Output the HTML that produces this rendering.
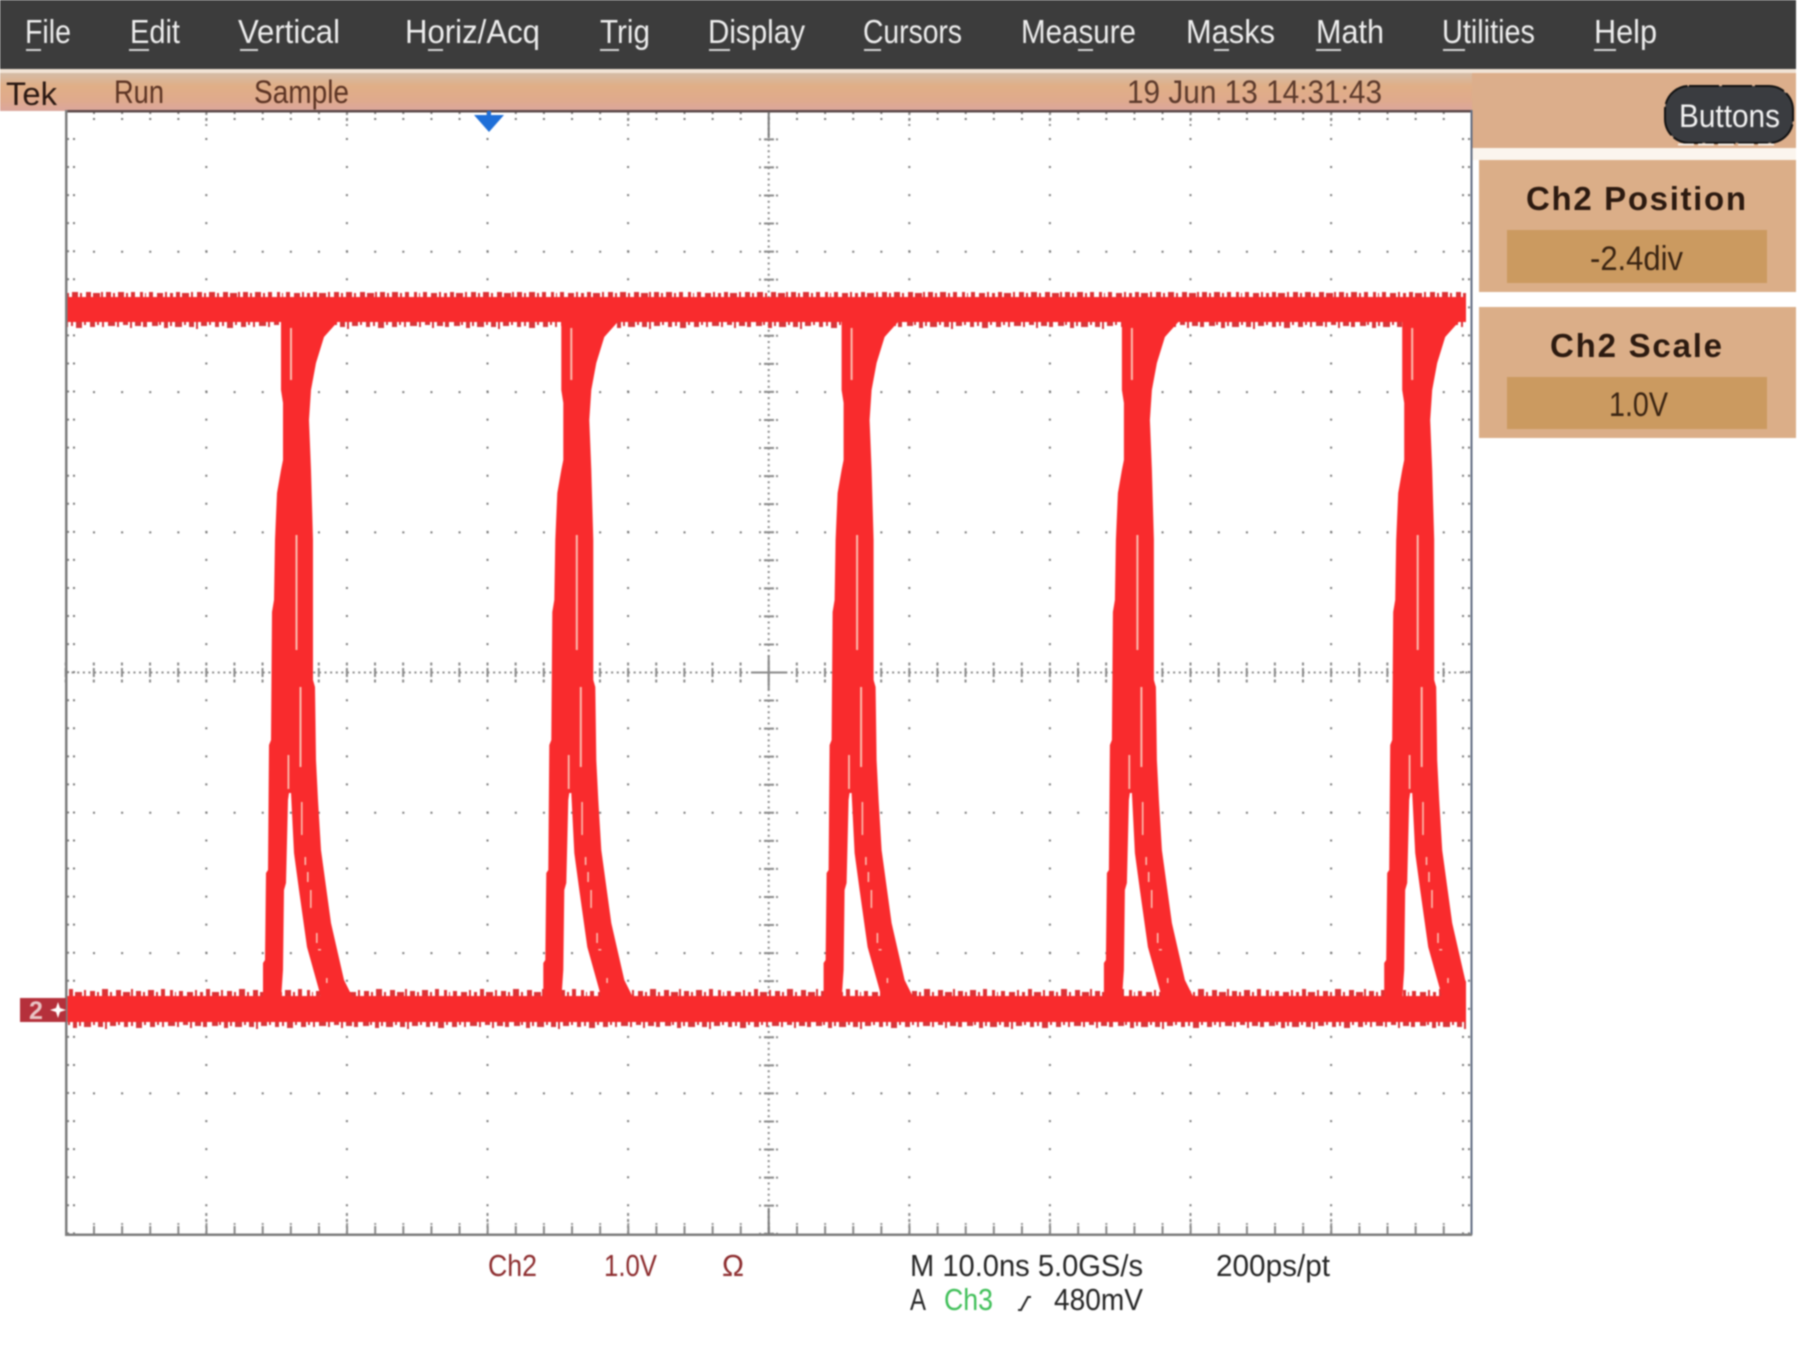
<!DOCTYPE html>
<html lang="en">
<head>
<meta charset="utf-8">
<title>Tek Scope</title>
<style>
html,body{margin:0;padding:0;background:#fff;width:1799px;height:1349px;overflow:hidden}
svg{display:block;filter:blur(.7px)}
text{font-family:"Liberation Sans",Arial,sans-serif}
</style>
</head>
<body>
<svg width="1799" height="1349" viewBox="0 0 1799 1349" xmlns="http://www.w3.org/2000/svg">
<defs>
<linearGradient id="strip" x1="0" y1="0" x2="0" y2="1">
<stop offset="0" stop-color="#d4bba6"/><stop offset=".35" stop-color="#e0ae86"/><stop offset=".7" stop-color="#dfaa8c"/><stop offset="1" stop-color="#dba69c"/>
</linearGradient>
<pattern id="up" patternUnits="userSpaceOnUse" width="137" height="9">
<path fill="#dc3236" d="M3 9V3h3v6zM8 9V5h1v4zM12 9V4h4v5zM20 9V5h6v4zM28 9V3h2v6zM33 9V5h3v4zM39 9V1h4v8zM45 9V5h7v4zM54 9V3h2v6zM60 9V4h5v5zM67 9V5h2v4zM72 9V2h6v7zM80 9V5h2v4zM86 9V3h5v6zM93 9V5h7v4zM101 9V2h2v7zM106 9V4h5v5zM113 9V5h2v4zM118 9V3h6v6zM126 9V5h2v4zM131 9V2h4v7z"/>
</pattern>
<pattern id="dn" patternUnits="userSpaceOnUse" width="151" height="9">
<path fill="#d8363a" d="M1 0v4h6V0zM8 0v3h2V0zM13 0v6h4V0zM19 0v4h2V0zM24 0v5h7V0zM33 0v3h2V0zM38 0v5h5V0zM45 0v7h2V0zM50 0v4h6V0zM58 0v3h2V0zM64 0v5h4V0zM71 0v4h2V0zM76 0v6h6V0zM84 0v3h2V0zM90 0v5h5V0zM97 0v3h2V0zM102 0v5h2V0zM108 0v4h7V0zM117 0v5h2V0zM123 0v3h5V0zM130 0v6h2V0zM135 0v4h6V0zM143 0v5h4V0z"/>
</pattern>
<g id="edge">
<polygon fill="#f92b2d" points="281,318 281,390 283,403 283,460 281,470 277,493 275,540 274,600 272,612 271,740 269,745 268,870 266,873 265,960 263,963 263,1000 281,1000 283,970 284,890 286,883 288,800 289,793 291,793 294,853 299,890 307,947 319,990 321,1000 354,1000 344,980 331,923 321,850 318,800 316,760 315,687 313,680 313,540 311,470 309,420 311,390 316,363 324,337 341,318"/>
<g fill="#fcbcae">
<rect x="290" y="328" width="2" height="52"/>
<rect x="295.500" y="535" width="2" height="115"/>
<rect x="299.500" y="687" width="2" height="80"/>
<rect x="287.500" y="755" width="1.800" height="34"/>
<rect x="301" y="802" width="1.600" height="33"/>
<rect x="304.500" y="857" width="1.600" height="8"/>
<rect x="307" y="872" width="1.600" height="10"/>
<rect x="310" y="890" width="1.600" height="18"/>
<rect x="316" y="933" width="1.600" height="10"/>
<rect x="318" y="949" width="3" height="1.500"/>
<rect x="326" y="978" width="1.600" height="5"/>
</g>
</g>
<clipPath id="scr"><rect x="66" y="112" width="1400" height="1122"/></clipPath>
</defs>

<rect width="1799" height="1349" fill="#fff"/>

<!-- menu bar -->
<rect x="0" y="0" width="1796" height="69" fill="#3c3c3c"/>
<rect x="0" y="69" width="1796" height="4" fill="#f1e3d5"/>

<!-- status strip and right block -->
<rect x="0" y="73" width="1472" height="38" fill="url(#strip)"/>
<rect x="1472" y="73" width="324" height="75" fill="#dcae8b"/>
<rect x="1472" y="148" width="324" height="12" fill="#fbf5ee"/>

<!-- side panels -->
<rect x="1479" y="160" width="317" height="132" fill="#dbae88"/>
<rect x="1507" y="230" width="260" height="53" fill="#cb9a60"/>
<rect x="1479" y="307" width="317" height="131" fill="#dbae88"/>
<rect x="1507" y="377" width="260" height="52" fill="#cb9a60"/>

<g font-size="33" font-weight="700" fill="#2c1a10">
<text x="1526" y="210" textLength="220">Ch2 Position</text>
<text x="1550" y="357" textLength="172">Ch2 Scale</text>
</g>
<g font-size="34" fill="#3a2412">
<text x="1590" y="270" textLength="93" lengthAdjust="spacingAndGlyphs">-2.4div</text>
<text x="1609" y="416" textLength="59" lengthAdjust="spacingAndGlyphs">1.0V</text>
</g>

<!-- Buttons pill -->
<rect x="1665" y="86" width="128" height="57" rx="24" fill="#3a3c40" stroke="#111" stroke-width="2" stroke-dasharray="30 3"/>
<path d="M1678 144.500h100" stroke="#f6efe6" stroke-width="2" stroke-dasharray="16 4"/>
<text x="1679" y="127" font-size="32" fill="#f2f2f2" textLength="101" lengthAdjust="spacingAndGlyphs">Buttons</text>

<!-- menu text -->
<g font-size="33" fill="#ededed">
<text x="25" y="43" textLength="46" lengthAdjust="spacingAndGlyphs">File</text>
<text x="130" y="43" textLength="50" lengthAdjust="spacingAndGlyphs">Edit</text>
<text x="238" y="43" textLength="102" lengthAdjust="spacingAndGlyphs">Vertical</text>
<text x="405" y="43" textLength="135" lengthAdjust="spacingAndGlyphs">Horiz/Acq</text>
<text x="600" y="43" textLength="50" lengthAdjust="spacingAndGlyphs">Trig</text>
<text x="708" y="43" textLength="97" lengthAdjust="spacingAndGlyphs">Display</text>
<text x="863" y="43" textLength="99" lengthAdjust="spacingAndGlyphs">Cursors</text>
<text x="1021" y="43" textLength="115" lengthAdjust="spacingAndGlyphs">Measure</text>
<text x="1186" y="43" textLength="89" lengthAdjust="spacingAndGlyphs">Masks</text>
<text x="1316" y="43" textLength="68" lengthAdjust="spacingAndGlyphs">Math</text>
<text x="1442" y="43" textLength="93" lengthAdjust="spacingAndGlyphs">Utilities</text>
<text x="1594" y="43" textLength="63" lengthAdjust="spacingAndGlyphs">Help</text>
</g>
<g fill="#d8d8d8">
<rect x="26" y="49" width="15" height="2"/>
<rect x="129" y="49" width="20" height="2"/>
<rect x="240" y="49" width="18" height="2"/>
<rect x="428" y="49" width="15" height="2"/>
<rect x="600" y="49" width="19" height="2"/>
<rect x="709" y="49" width="21" height="2"/>
<rect x="864" y="49" width="17" height="2"/>
<rect x="1078" y="49" width="15" height="2"/>
<rect x="1214" y="49" width="15" height="2"/>
<rect x="1316" y="49" width="25" height="2"/>
<rect x="1443" y="49" width="22" height="2"/>
<rect x="1594" y="49" width="22" height="2"/>
</g>

<!-- status text -->
<text x="6" y="105" font-size="32" fill="#2a1812" textLength="51" lengthAdjust="spacingAndGlyphs">Tek</text>
<text x="114" y="103" font-size="32" fill="#5c3424" textLength="50" lengthAdjust="spacingAndGlyphs">Run</text>
<text x="254" y="103" font-size="32" fill="#5c3424" textLength="95" lengthAdjust="spacingAndGlyphs">Sample</text>
<text x="1127" y="103" font-size="32" fill="#5c3a2c" textLength="255" lengthAdjust="spacingAndGlyphs">19 Jun 13 14:31:43</text>

<!-- graticule: major dotted lines -->
<g fill="none" stroke="#7a7a7a" stroke-width="2" stroke-dasharray="2 26.06">
<line x1="206.300" y1="138" x2="206.300" y2="1234"/>
<line x1="346.900" y1="138" x2="346.900" y2="1234"/>
<line x1="487.500" y1="138" x2="487.500" y2="1234"/>
<line x1="628.100" y1="138" x2="628.100" y2="1234"/>
<line x1="909.300" y1="138" x2="909.300" y2="1234"/>
<line x1="1049.900" y1="138" x2="1049.900" y2="1234"/>
<line x1="1190.500" y1="138" x2="1190.500" y2="1234"/>
<line x1="1331.100" y1="138" x2="1331.100" y2="1234"/>
<line x1="68" y1="138" x2="68" y2="1234"/>
<line x1="74" y1="138" x2="74" y2="1234"/>
<line x1="1463" y1="138" x2="1463" y2="1234"/>
<line x1="1469" y1="138" x2="1469" y2="1234"/>
</g>
<g fill="none" stroke="#7a7a7a" stroke-width="2" stroke-dasharray="2 26.12">
<line x1="93" y1="251.800" x2="1471" y2="251.800"/>
<line x1="93" y1="392.100" x2="1471" y2="392.100"/>
<line x1="93" y1="532.400" x2="1471" y2="532.400"/>
<line x1="93" y1="812.800" x2="1471" y2="812.800"/>
<line x1="93" y1="953.100" x2="1471" y2="953.100"/>
<line x1="93" y1="1093.400" x2="1471" y2="1093.400"/>
<line x1="93" y1="113" x2="1471" y2="113"/>
<line x1="93" y1="119" x2="1471" y2="119"/>
<line x1="93" y1="1224" x2="1471" y2="1224" stroke="#999"/>
<line x1="93" y1="1230" x2="1471" y2="1230" stroke-width="8" stroke="#888"/>
</g>
<!-- major edge ticks -->
<g stroke="#8a8a8a" stroke-width="2">
<path stroke-dasharray="3 3" d="M206.300 112v14M346.900 112v14M487.500 112v14M628.100 112v14M909.300 112v14M1049.900 112v14M1190.500 112v14M1331.100 112v14M206.300 1234v-22M346.900 1234v-22M487.500 1234v-22M628.100 1234v-22M909.300 1234v-22M1049.900 1234v-22M1190.500 1234v-22M1331.100 1234v-22"/>
</g>
<!-- centre cross -->
<g fill="none" stroke="#8a8a8a">
<line x1="66" y1="672.500" x2="1471" y2="672.500" stroke-width="2" stroke-dasharray="2 3.62"/>
<line x1="768.700" y1="111" x2="768.700" y2="1234" stroke-width="2" stroke-dasharray="2 3.61"/>
<line x1="64.700" y1="672.500" x2="1471" y2="672.500" stroke-width="9" stroke-dasharray="2 26.12"/>
<line x1="64.700" y1="664" x2="1471" y2="664" stroke-width="3" stroke-dasharray="2 26.12"/>
<line x1="64.700" y1="681" x2="1471" y2="681" stroke-width="3" stroke-dasharray="2 26.12"/>
<line x1="765" y1="110.300" x2="765" y2="1234" stroke-width="2" stroke-dasharray="2 26.06"/>
<line x1="769" y1="110.300" x2="769" y2="1234" stroke-width="8" stroke-dasharray="2 26.06"/>
<line x1="773" y1="110.300" x2="773" y2="1234" stroke-width="2" stroke-dasharray="2 26.06"/>
<line x1="760" y1="110.300" x2="760" y2="1234" stroke-width="2" stroke-dasharray="2 26.06"/>
<line x1="777" y1="110.300" x2="777" y2="1234" stroke-width="2" stroke-dasharray="2 26.06"/>
<path d="M751 672.500h36M768.700 655v35" stroke-width="2"/>
</g>

<!-- waveform -->
<g clip-path="url(#scr)">
<rect x="66" y="297" width="1400" height="25" fill="#f92b2d"/>
<rect x="66" y="996" width="1400" height="26" fill="#f92b2d"/>
<g transform="translate(0,288)"><rect x="66" y="4" width="1400" height="5" fill="url(#up)"/></g>
<g transform="translate(0,322)"><rect x="66" y="0" width="1400" height="8" fill="url(#dn)"/></g>
<g transform="translate(30,987)"><rect x="36" y="2" width="1400" height="7" fill="url(#up)"/></g>
<g transform="translate(60,1022)"><rect x="6" y="0" width="1400" height="7" fill="url(#dn)"/></g>
<use href="#edge"/>
<use href="#edge" x="280.300"/>
<use href="#edge" x="560.600"/>
<use href="#edge" x="840.900"/>
<use href="#edge" x="1121.200"/>
</g>

<!-- frame -->
<rect x="66" y="110" width="1405" height="2.500" fill="#5a4848"/>
<rect x="65" y="110" width="2.500" height="1125" fill="#7c7c7c"/>
<rect x="1470.500" y="110" width="2" height="1125" fill="#5f6b80"/>
<rect x="65" y="1233.500" width="1407" height="2.500" fill="#7c7c7c"/>
<path d="M768.700 1234v-26" stroke="#7a7a7a" stroke-width="2"/>
<path d="M768.700 112v26" stroke="#7a7a7a" stroke-width="2"/>

<!-- trigger position marker -->
<polygon points="474,115 487,115 487,111 491,111 491,115 504,115 489,132" fill="#1f6fd8"/>

<!-- ground marker -->
<polygon points="20,998 66,998 66,1022 20,1022" fill="#b5303b"/>
<text x="29" y="1019" font-size="25" font-weight="700" fill="#e8c4c4">2</text>
<path d="M58 1002l2 6 6 2-6 2-2 6-2-6-6-2 6-2z" fill="#fff"/>

<!-- readouts -->
<g font-size="31" fill="#8c2b2d">
<text x="488" y="1276" textLength="49" lengthAdjust="spacingAndGlyphs">Ch2</text>
<text x="604" y="1276" textLength="53" lengthAdjust="spacingAndGlyphs">1.0V</text>
<text x="722" y="1276" textLength="22" lengthAdjust="spacingAndGlyphs">Ω</text>
</g>
<g font-size="31" fill="#262626">
<text x="910" y="1276" textLength="233" lengthAdjust="spacingAndGlyphs">M 10.0ns 5.0GS/s</text>
<text x="1216" y="1276" textLength="114" lengthAdjust="spacingAndGlyphs">200ps/pt</text>
<text x="910" y="1310" textLength="16" lengthAdjust="spacingAndGlyphs">A</text>
<text x="1054" y="1310" textLength="89" lengthAdjust="spacingAndGlyphs">480mV</text>
</g>
<text x="944" y="1310" font-size="31" fill="#3fbf58" textLength="49" lengthAdjust="spacingAndGlyphs">Ch3</text>
<path d="M1018 1310h3l7-13h3" fill="none" stroke="#262626" stroke-width="2"/>
</svg>
</body>
</html>
